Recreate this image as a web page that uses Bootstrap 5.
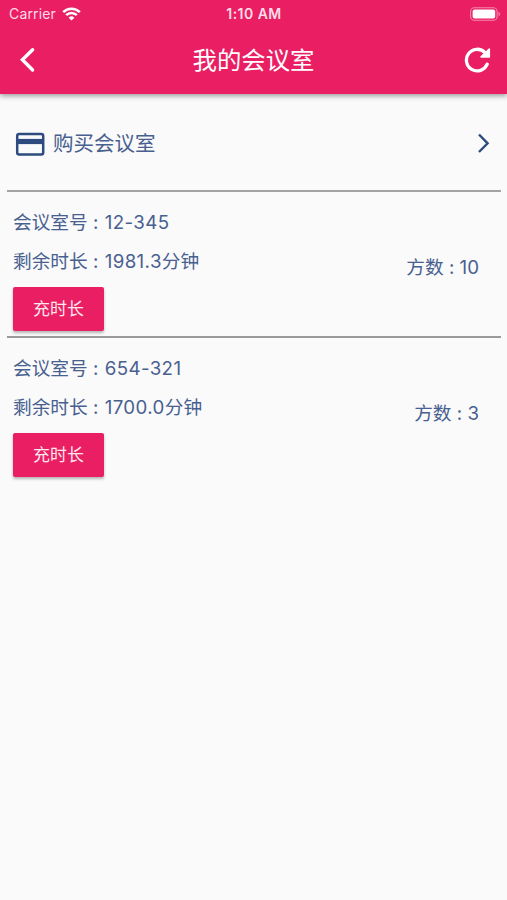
<!DOCTYPE html>
<html lang="zh-CN">
<head>
<meta charset="utf-8">
<meta name="viewport" content="width=device-width, initial-scale=1">
<title>我的会议室</title>
<link rel="stylesheet" href="https://cdn.jsdelivr.net/npm/bootstrap@5.3.0/dist/css/bootstrap.min.css">
<style>
body{background:#fafafa;color:#48608f;font-family:Inter,"Noto Sans CJK SC",sans-serif;min-height:100vh;overflow:hidden}
.app-header{height:94px;background:#e91e63;box-shadow:0 2px 5px rgba(0,0,0,.38)}
.triple{display:grid;grid-template-columns:1fr auto 1fr;align-items:center}
.status{height:27px;padding:0 6px 0 9px;font-size:14px;line-height:20px;color:#ffdce7}
.carrier{letter-spacing:.15px}
.wifi{margin-left:6px}
.clock{font-size:14px;font-weight:600;letter-spacing:.45px;margin-right:2px}
.title-bar{height:65px;padding:0 16px 0 18px}
.title-bar h1{font-size:24.4px;font-weight:400;line-height:36px;margin:1px 2px 0 0}
.buy{height:96px;margin:0 7px;padding:2px 9px 0 8px;color:#48608f;font-size:20.5px}
.buy svg{color:#2d4b7e}
.buy-label{margin-left:8px;padding-top:2px}
.room{height:147px;margin:0 6px 0 7px;padding:0 22px 0 6px;border-top:2px solid #a3a3a3;font-size:18.7px;line-height:28px;font-feature-settings:"calt" 0}
.room + .room{margin-top:-1px;border-top-color:#9a9a9a}
.room-no{margin-top:17px}
.room-time{margin:11px 0 11px}
.digits{letter-spacing:.4px;margin-left:1px}
.room-size{padding-top:6px}
.btn-topup{width:91px;height:44px;padding:2px 0 0;border:0;border-radius:2px;background:#e91e63;color:#ffe6ee;font-size:17px;box-shadow:0 2px 3px rgba(0,0,0,.28)}
</style>
<script src="https://cdn.jsdelivr.net/npm/bootstrap@5.3.0/dist/js/bootstrap.bundle.min.js" defer></script>
</head>
<body>
<header class="app-header text-white">
  <div class="status triple">
    <div class="d-flex align-items-center"><span class="carrier">Carrier</span>
      <svg class="wifi" width="19" height="14" viewBox="0 0 19 14" fill="none" stroke="#fff" stroke-width="2.6"><path d="M1.2 5.1a11.8 11.8 0 0 1 16.6 0M4.2 8.2a7.5 7.5 0 0 1 10.6 0"/><path d="M9.5 13.6L6.6 10.7a4.1 4.1 0 0 1 5.8 0z" fill="#fff" stroke="none"/></svg>
    </div>
    <span class="clock">1:10 AM</span>
    <svg class="ms-auto" width="32" height="14" viewBox="0 0 32 14"><rect x="1.6" y=".7" width="26.5" height="12.6" rx="3.8" fill="none" stroke="#f589ac" stroke-width="1.1"/><rect x="3.6" y="2.6" width="22.6" height="8.8" rx="2" fill="#fff"/><path d="M29.6 4.8v4.4q1.6-.8 1.6-2.2t-1.6-2.2z" fill="#f589ac"/></svg>
  </div>
  <div class="title-bar triple">
    <svg width="18" height="26" viewBox="0 0 18 26" fill="none" stroke="#fff" stroke-width="3.4" stroke-linecap="round"><path d="M14.6 2.7L4.4 12.8 14.6 23"/></svg>
    <h1>我的会议室</h1>
    <svg class="ms-auto" width="27" height="28" viewBox="0 0 27 28" fill="none" stroke="#fff" stroke-width="3.3" stroke-linecap="round"><path d="M23.2 18.2A10.8 10.8 0 1 1 21.2 6.8"/><path d="M25.3 3v7.9h-8.2z" fill="#fff" stroke-width="1.6" stroke-linejoin="round"/></svg>
  </div>
</header>
<main>
  <a href="#" class="buy d-flex align-items-center text-decoration-none">
    <svg width="30" height="26" viewBox="0 0 30 26"><rect x="2.2" y="4.1" width="26" height="20.4" rx="2" fill="none" stroke="currentColor" stroke-width="2.5"/><path d="M2 8.9h26.4v5.2H2z" fill="currentColor"/></svg>
    <span class="buy-label">购买会议室</span>
    <svg class="ms-auto" width="14" height="22" viewBox="0 0 14 22" fill="none" stroke="currentColor" stroke-width="2.4"><path d="M2 2.5L10.6 11.3 2 20"/></svg>
  </a>
  <section class="room d-flex align-items-center justify-content-between">
    <div class="align-self-start">
      <div class="room-no">会议室号 : <span class="digits">12-345</span></div>
      <div class="room-time">剩余时长 : <span class="digits">1981.3</span>分钟</div>
      <button type="button" class="btn btn-topup d-block">充时长</button>
    </div>
    <div class="room-size">方数 : 10</div>
  </section>
  <section class="room d-flex align-items-center justify-content-between">
    <div class="align-self-start">
      <div class="room-no">会议室号 : <span class="digits">654-321</span></div>
      <div class="room-time">剩余时长 : <span class="digits">1700.0</span>分钟</div>
      <button type="button" class="btn btn-topup d-block">充时长</button>
    </div>
    <div class="room-size">方数 : 3</div>
  </section>
</main>
</body>
</html>
